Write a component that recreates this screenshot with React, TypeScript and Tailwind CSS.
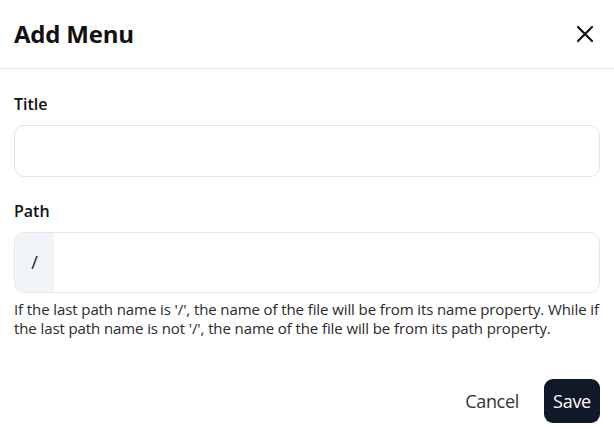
import React from 'react';

const font = { fontFamily: '"Open Sans", "Noto Sans", sans-serif' };

export default function App() {
  const [title, setTitle] = React.useState('');
  const [path, setPath] = React.useState('');

  return (
    <div className="w-[614px] h-[429px] bg-white text-[#111111] overflow-hidden" style={font}>
      <div className="flex items-center justify-between h-[69px] px-[14px] border-b border-[#e5e5e5]">
        <h2 className="text-[24px] font-bold tracking-[-0.2px]">Add Menu</h2>
        <button className="w-6 h-6 flex items-center justify-center mr-[3px]">
          <svg width="20" height="20" viewBox="0 0 20 20" fill="none" stroke="#111" strokeWidth="2.2" strokeLinecap="round">
            <path d="M3 3 L17 17 M17 3 L3 17" />
          </svg>
        </button>
      </div>

      <div className="px-[14px] pt-[24px]">
        <label className="block text-[16px] font-semibold leading-[22px]">Title</label>
        <input
          value={title}
          onChange={(e) => setTitle(e.target.value)}
          className="mt-[10px] w-full h-[52px] rounded-[10px] border border-[#e3e3e3] px-3 outline-none"
        />

        <label className="block mt-[23px] text-[16px] font-semibold leading-[22px]">Path</label>
        <div className="mt-[10px] flex h-[61px] rounded-[10px] border border-[#e6e6e6] overflow-hidden">
          <span className="w-[39px] bg-[#f1f5f9] flex items-center justify-center text-[18px] text-[#222]">/</span>
          <input
            value={path}
            onChange={(e) => setPath(e.target.value)}
            className="flex-1 px-3 outline-none"
          />
        </div>
        <p className="mt-[7px] text-[15px] leading-[19px] text-[#2a2a2a] tracking-[-0.1px]">
          If the last path name is '/', the name of the file will be from its name property. While if the last path name is not '/', the name of the file will be from its path property.
        </p>

        <div className="flex justify-end items-center gap-[10px] mt-[41px]">
          <button className="h-[44px] px-[15px] text-[18px] text-[#333] tracking-[-0.3px]">Cancel</button>
          <button className="h-[44px] w-[56px] rounded-[9px] bg-[#111827] text-white text-[18px] tracking-[-0.3px]">Save</button>
        </div>
      </div>
    </div>
  );
}
